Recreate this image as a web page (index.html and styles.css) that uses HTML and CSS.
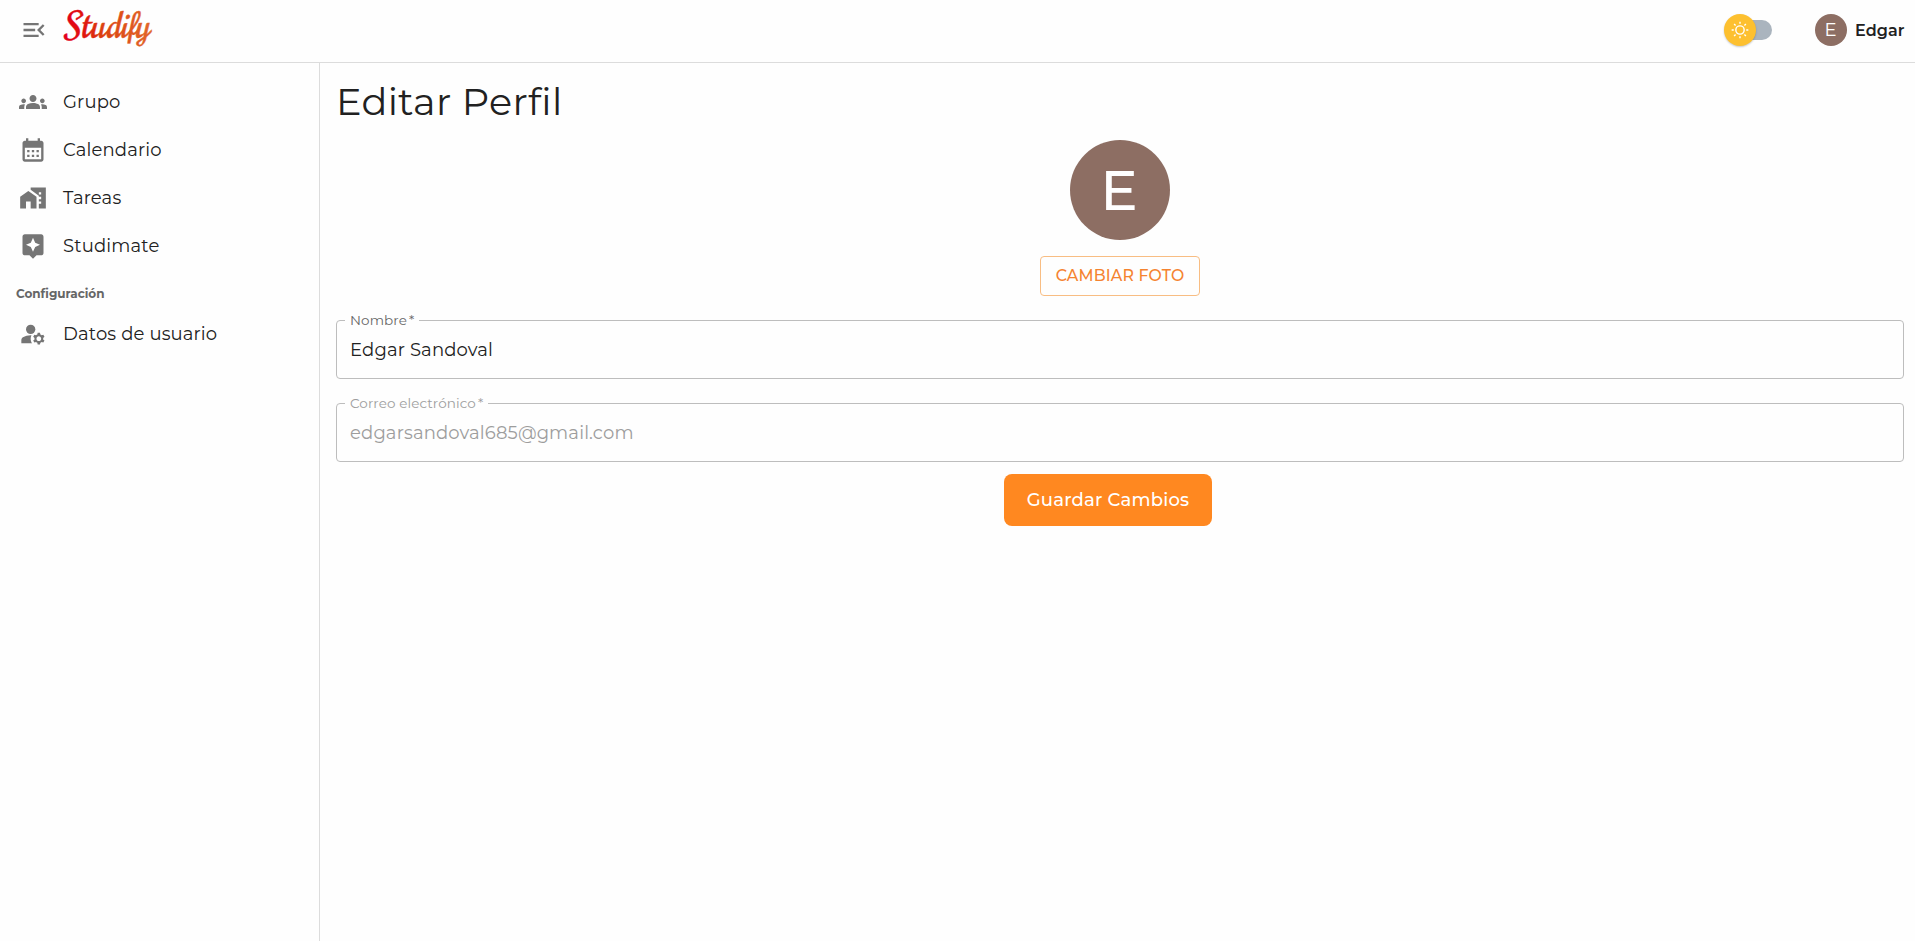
FILE: index.html
```html
<!DOCTYPE html>
<html lang="es">
<head>
<meta charset="utf-8">
<title>Studify</title>
<link rel="stylesheet" href="styles.css">
</head>
<body>
<header class="topbar">
  <svg class="menu-icon" viewBox="0 0 24 24"><path d="M3 18h13v-2H3v2zm0-5h10v-2H3v2zm0-7v2h13V6H3zm18 9.590L17.420 12 21 8.410 19.590 7l-5 5 5 5L21 15.590z"/></svg>
  <svg class="logo" viewBox="0 0 96 48">
    <defs><linearGradient id="logo-fill" x1="0" x2="1"><stop offset="0" stop-color="#e3001b"/><stop offset=".2" stop-color="#e0100f"/><stop offset=".45" stop-color="#dc4310"/><stop offset="1" stop-color="#e2672a"/></linearGradient></defs>
    <text class="logo-text" x="3" y="31.500" textLength="85" lengthAdjust="spacingAndGlyphs" fill="url(#logo-fill)" stroke="url(#logo-fill)" stroke-width=".4">Studify</text>
  </svg>
  <div class="account">
    <div class="switch"><span class="thumb"><svg viewBox="0 0 20 20"><path d="M9.305 1.667V3.750h1.389V1.667h-1.390zm-4.707 1.950l-.982.982L5.090 6.072l.982-.982-1.473-1.473zm10.802 0L13.927 5.090l.982.982 1.473-1.473-.982-.982zM10 5.139a4.872 4.872 0 00-4.862 4.860A4.872 4.872 0 0010 14.862 4.872 4.872 0 0014.860 10 4.872 4.872 0 0010 5.139zm0 1.389A3.462 3.462 0 0113.471 10a3.462 3.462 0 01-3.473 3.472A3.462 3.462 0 016.527 10 3.462 3.462 0 0110 6.528zM1.665 9.305v1.390h2.083v-1.390H1.666zm14.583 0v1.390h2.084v-1.390h-2.084zM5.090 13.928L3.616 15.400l.982.982 1.473-1.473-.982-.982zm9.820 0l-.982.982 1.473 1.473.982-.982-1.473-1.473zM9.305 16.250v2.083h1.389V16.250h-1.390z"/></svg></span></div>
    <div class="avatar">E</div>
    <span class="user-name">Edgar</span>
  </div>
</header>
<div class="layout">
  <nav class="sidebar">
    <a class="item"><svg viewBox="0 0 24 24"><path d="M12 12.750c1.630 0 3.070.390 4.240.900 1.080.480 1.760 1.560 1.760 2.730V18H6v-1.610c0-1.180.680-2.260 1.760-2.730 1.170-.520 2.610-.910 4.240-.910zM4 13c1.100 0 2-.900 2-2s-.900-2-2-2-2 .900-2 2 .900 2 2 2zm1.130 1.100c-.370-.060-.740-.100-1.130-.100-.990 0-1.930.210-2.780.580C.480 14.900 0 15.620 0 16.430V18h4.500v-1.610c0-.830.230-1.610.630-2.290zM20 13c1.100 0 2-.900 2-2s-.900-2-2-2-2 .900-2 2 .900 2 2 2zm4 3.430c0-.810-.480-1.530-1.220-1.850-.850-.370-1.790-.580-2.780-.580-.390 0-.760.040-1.130.100.400.680.630 1.460.630 2.290V18H24v-1.570zM12 6c1.660 0 3 1.340 3 3s-1.340 3-3 3-3-1.340-3-3 1.340-3 3-3z"/></svg><span>Grupo</span></a>
    <a class="item"><svg viewBox="0 0 24 24"><path d="M19 4h-1V2h-2v2H8V2H6v2H5c-1.110 0-1.990.900-1.990 2L3 20c0 1.100.890 2 2 2h14c1.100 0 2-.900 2-2V6c0-1.100-.900-2-2-2zm0 16H5V10h14v10zM9 14H7v-2h2v2zm4 0h-2v-2h2v2zm4 0h-2v-2h2v2zm-8 4H7v-2h2v2zm4 0h-2v-2h2v2zm4 0h-2v-2h2v2z"/></svg><span>Calendario</span></a>
    <a class="item"><svg viewBox="0 0 24 24"><path d="M1 11v10h5v-6h4v6h5V11L8 6z"/><path d="M10 3v1.970l7 5V11h2v2h-2v2h2v2h-2v4h6V3H10zm9 6h-2V7h2v2z"/></svg><span>Tareas</span></a>
    <a class="item"><svg viewBox="0 0 24 24"><path d="M19 2H5c-1.100 0-2 .900-2 2v14c0 1.100.900 2 2 2h4l3 3 3-3h4c1.100 0 2-.900 2-2V4c0-1.100-.900-2-2-2zm-5.120 10.880L12 17l-1.880-4.120L6 11l4.120-1.880L12 5l1.880 4.120L18 11l-4.120 1.880z"/></svg><span>Studimate</span></a>
    <h2 class="section">Configuración</h2>
    <a class="item"><svg viewBox="0 0 24 24"><circle cx="10" cy="8" r="4"/><path d="M10.670 13.020c-.220-.010-.440-.020-.670-.020-2.420 0-4.680.670-6.610 1.820-.880.520-1.390 1.500-1.390 2.530V20h9.260c-.790-1.130-1.260-2.510-1.260-4 0-1.070.250-2.070.670-2.980zM20.750 16c0-.220-.030-.420-.060-.630l1.140-1.010-1-1.730-1.450.490c-.320-.270-.680-.480-1.080-.630L18 11h-2l-.300 1.490c-.400.150-.760.360-1.080.630l-1.450-.490-1 1.730 1.140 1.010c-.030.210-.060.410-.060.630s.030.420.060.630l-1.140 1.010 1 1.730 1.450-.490c.320.270.680.480 1.080.630L16 21h2l.300-1.490c.400-.150.760-.360 1.080-.630l1.450.490 1-1.730-1.140-1.010c.030-.210.060-.410.060-.630zM17 18c-1.100 0-2-.900-2-2s.900-2 2-2 2 .900 2 2-.900 2-2 2z"/></svg><span>Datos de usuario</span></a>
  </nav>
  <main class="content">
    <h1 class="title">Editar Perfil</h1>
    <div class="photo">
      <div class="avatar avatar-large">E</div>
      <button class="change">CAMBIAR FOTO</button>
    </div>
    <fieldset class="field"><legend>Nombre<span class="star">*</span></legend><div class="value">Edgar Sandoval</div></fieldset>
    <fieldset class="field disabled"><legend>Correo electrónico<span class="star">*</span></legend><div class="value">edgarsandoval685@gmail.com</div></fieldset>
    <button class="save">Guardar Cambios</button>
  </main>
</div>
</body>
</html>
```
FILE: styles.css
```css
* { box-sizing: border-box; }
body {
  margin: 0;
  height: 941px;
  display: flex;
  flex-direction: column;
  overflow: hidden;
  background: #fefefe;
  color: #212121;
  font-family: Montserrat, Inter, "Open Sans", sans-serif;
  font-size: 18px;
  letter-spacing: .15px;
}
.topbar {
  height: 63px;
  flex: none;
  display: flex;
  align-items: flex-start;
  border-bottom: 1px solid #dcdcdc;
  padding: 0 11px 0 19.500px;
}
.menu-icon { width: 28px; height: 28px; margin: 16px 14.500px 0 0; fill: #757575; }
.logo { width: 96px; height: 48px; margin-top: 5px; overflow: visible; }
.logo-text { font: 400 36px "Norican", "Niconne", "Playball", "Courgette", "Dancing Script", "Liberation Serif", cursive; letter-spacing: 0; }
.account { display: flex; align-items: center; height: 60px; margin-left: auto; }
.switch {
  width: 40px;
  height: 20px;
  margin-right: 43px;
  border-radius: 10px;
  background: #aab4be;
  display: flex;
  align-items: center;
}
.thumb {
  flex: none;
  width: 32px;
  height: 32px;
  margin-left: -8px;
  border-radius: 50%;
  background: #fdc02f;
  box-shadow: 0 1px 2px rgba(0, 0, 0, .22);
  display: grid;
  place-items: center;
}
.thumb svg { width: 20px; height: 20px; fill: #fff; }
.avatar {
  width: 32px;
  height: 32px;
  border-radius: 50%;
  background: #8d6e63;
  color: #fff;
  display: grid;
  place-items: center;
  padding-right: 1px;
  font-size: 18px;
}
.user-name { width: 49px; margin-left: 8px; font-size: 16px; font-weight: 600; letter-spacing: .1px; }
.layout { display: flex; flex: 1; min-height: 0; }
.sidebar { width: 320px; border-right: 1px solid #dcdcdc; padding-top: 15px; }
.item { display: flex; align-items: center; height: 48px; padding-left: 18.500px; }
.item svg { width: 28px; height: 28px; margin-right: 16.500px; fill: #757575; }
.section { margin: 0; height: 40px; padding: 0 16px; line-height: 47px; font-size: 12px; font-weight: 700; letter-spacing: 0; color: #666; }
.content { flex: 1; padding: 15px 11px 0 16px; display: flex; flex-direction: column; }
.title { margin: 0; height: 50px; line-height: 48px; font-size: 38.250px; font-weight: 400; letter-spacing: .28px; }
.photo { display: flex; flex-direction: column; align-items: center; margin-top: 12px; }
.avatar-large { width: 100px; height: 100px; padding-right: 2px; font-size: 56px; font-weight: 500; }
.change {
  width: 160px;
  height: 40px;
  margin-top: 16px;
  padding: 0 0 1px;
  border: 1px solid #f8bd83;
  border-radius: 4px;
  background: transparent;
  color: #f58330;
  font: 500 15.750px Montserrat, Inter, sans-serif;
  letter-spacing: .15px;
}
.field {
  height: 66px;
  margin: 17px 0 0;
  padding: 0 13px;
  border: 1px solid #bdbdbd;
  border-radius: 4px;
  min-width: 0;
}
.field legend {
  height: 14px;
  line-height: 14px;
  margin-left: -5px;
  padding: 0 5px;
  font-size: 13.500px;
  letter-spacing: .11px;
  color: #666;
  white-space: nowrap;
}
.star { margin-left: 2px; }
.value { margin-top: 9px; line-height: 28px; }
.disabled legend, .disabled .value { color: #9d9d9d; }
.save {
  align-self: center;
  width: 208px;
  height: 52px;
  margin: 12px 24px 0 0;
  border: 0;
  border-radius: 8px;
  background: #ff8820;
  color: #fff;
  font: 500 18px Montserrat, Inter, sans-serif;
  letter-spacing: .2px;
}
```
